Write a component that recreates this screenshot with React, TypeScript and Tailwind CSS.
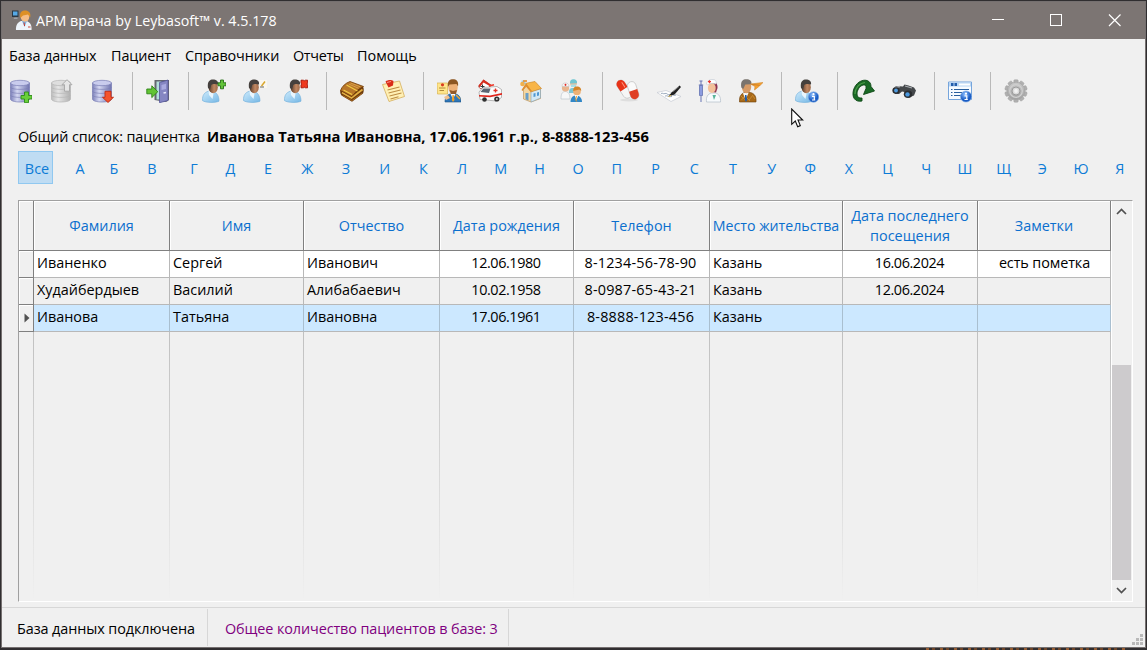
import React from "react";

type IconProps = { children: React.ReactNode };

const Icon = ({ children }: IconProps) => (
  <svg width="24" height="24" viewBox="0 0 24 24" className="block shrink-0">
    {children}
  </svg>
);

const Gradients = () => (
  <svg width="0" height="0" className="absolute">
    <defs>
      <linearGradient id="db" x1="0" x2="1">
        <stop offset="0" stopColor="#7c80ba" />
        <stop offset=".35" stopColor="#d5d8f2" />
        <stop offset="1" stopColor="#6f73ae" />
      </linearGradient>
      <linearGradient id="dbg" x1="0" x2="1">
        <stop offset="0" stopColor="#bdbdbd" />
        <stop offset=".35" stopColor="#e6e6e6" />
        <stop offset="1" stopColor="#b0b0b0" />
      </linearGradient>
      <linearGradient id="shirt" x1="0" x2="1" y2="1">
        <stop offset="0" stopColor="#cdeafb" />
        <stop offset="1" stopColor="#76b8e6" />
      </linearGradient>
      <linearGradient id="skin" x1="0" x2="1">
        <stop offset="0" stopColor="#5a3a28" />
        <stop offset=".6" stopColor="#c08863" />
        <stop offset="1" stopColor="#a06a48" />
      </linearGradient>
      <radialGradient id="info" cx=".4" cy=".3">
        <stop offset="0" stopColor="#8dc0ff" />
        <stop offset="1" stopColor="#1a5cc4" />
      </radialGradient>
      <linearGradient id="gear" x1="0" x2="0" y2="1">
        <stop offset="0" stopColor="#c9c9c9" />
        <stop offset="1" stopColor="#a0a0a0" />
      </linearGradient>
    </defs>
  </svg>
);

const Cylinder = ({ fill, line, top }: { fill: string; line: string; top: string }) => (
  <g>
    <path d="M2.500 4v16c0 1.800 4 3 9.500 3s9.500-1.200 9.500-3V4z" fill={fill} stroke={line} strokeWidth=".7" />
    <ellipse cx="12" cy="4" rx="9.500" ry="2.700" fill={top} stroke={line} strokeWidth=".7" />
    <path
      d="M2.500 8.500c2 2.500 17 2.500 19 0M2.500 12.500c2 2.500 17 2.500 19 0M2.500 16.500c2 2.500 17 2.500 19 0"
      fill="none"
      stroke={line}
      strokeWidth=".8"
      opacity=".8"
    />
  </g>
);

const DbAdd = () => (
  <Icon>
    <Cylinder fill="url(#db)" line="#7a7eb4" top="#c9cced" />
    <path d="M16.500 13h4v3.500H24v3.500h-3.500v3.700h-4V20H13v-3.500h3.500z" fill="#69cf3a" stroke="#2d8a18" strokeWidth=".9" />
  </Icon>
);
const DbUp = () => (
  <Icon>
    <Cylinder fill="url(#dbg)" line="#b4b4b4" top="#dedede" />
    <path d="M18 .7l5 5h-2.500v6.500h-5V5.700H13z" fill="#e6e6e6" stroke="#a6a6a6" strokeWidth=".9" />
  </Icon>
);
const DbDown = () => (
  <Icon>
    <Cylinder fill="url(#db)" line="#7a7eb4" top="#c9cced" />
    <path d="M18 23.500l-5.500-5.200h2.500v-6h6v6h2.500z" fill="#f4532c" stroke="#c22b12" strokeWidth=".9" />
  </Icon>
);
const Exit = () => (
  <Icon>
    <path d="M8.500 1h14.500v20l-3 2-11.500-2z" fill="#64676f" />
    <path d="M10.500 2.500h5v18h-5z" fill="#b3dedc" />
    <path d="M13.500 3.500l8.500-2.500v20.500l-8.500 2.200z" fill="#8586c2" stroke="#55579b" strokeWidth=".8" />
    <path d="M15.500 6l4.500-1.300v5.300l-4.500 1z" fill="#a9aae0" />
    <path d="M17.500 14l2.500-.5" stroke="#e6e6fa" strokeWidth="1.600" />
    <path d="M.8 10h5V6.800l6 5.900-6 5.900v-3.800H.8z" fill="#62c334" stroke="#2d8317" strokeWidth=".9" />
  </Icon>
);

const Person = () => (
  <g>
    <path d="M.4 21.500c0-5.500 2-8 6-9.300h4c4 1 6.600 4 6.600 10-3 1.500-13 2-16.600-.7z" fill="url(#shirt)" stroke="#6dacda" strokeWidth=".6" />
    <path d="M6.500 11l5.500 1-1.500 8-3.500-4z" fill="#e9f6fe" />
    <ellipse cx="11.200" cy="8.300" rx="4.600" ry="6" fill="url(#skin)" />
    <path d="M6 9C5 2 8 .4 11 .4s5.800 1.500 5 5.200C13.500 4.600 10.500 4.800 9.300 6L8 10.500z" fill="#45403d" />
  </g>
);
const UserAdd = () => (
  <Icon>
    <Person />
    <path d="M18.500 1h3v2.800h2.500v3h-2.500v3h-3v-3h-2.500v-3h2.500z" fill="#62c439" stroke="#276f16" strokeWidth=".9" />
  </Icon>
);
const UserEdit = () => (
  <Icon>
    <Person />
    <path d="M16 1h8v8h-8z" fill="#faf7f0" />
    <path d="M18.500 7l3.500-4.500" stroke="#d9a72c" strokeWidth="1.500" />
    <path d="M17 8h4" stroke="#555" strokeWidth=".9" />
  </Icon>
);
const UserRemove = () => (
  <Icon>
    <Person />
    <path d="M17 1.200H19.300L20.300 1.800L21.300 1.200H23.600V3.800L23 5L23.600 6.200V8.800H21.300L20.300 8.200L19.300 8.800H17V6.200L17.600 5L17 3.800Z" fill="#ee3a20" stroke="#a31408" strokeWidth=".9" />
  </Icon>
);
const Info = ({ x, y, r }: { x: number; y: number; r: number }) => (
  <g>
    <circle cx={x} cy={y} r={r} fill="url(#info)" stroke="#8ab3e6" strokeWidth=".6" />
    <circle cx={x} cy={y - 2.8} r="1.100" fill="#fff" />
    <path d={`M${x - 1.5} ${y - 0.7}h2.300v3.700h1M${x - 1.5} ${y + 3}h3`} fill="none" stroke="#fff" strokeWidth="1.200" />
  </g>
);
const UserInfo = () => (
  <Icon>
    <Person />
    <Info x={18.5} y={18} r={5.3} />
  </Icon>
);
const Book = () => (
  <Icon>
    <path d="M.5 11Q-.5 14 1.500 16.500L12 22.800l11-8.300Q24.500 11 23 7.500z" fill="#6d3b0c" />
    <path d="M2 13.500L11.500 19l11-8.500" stroke="#e3ae42" strokeWidth="1.800" fill="none" />
    <path d="M2.500 16.500l9.500 5 10-7" stroke="#a8681f" fill="none" />
    <path d="M.5 11.500Q3 5 10 2.500L23.500 7.500Q17 10 12 17.500z" fill="#b8772a" stroke="#743b06" strokeWidth=".8" />
    <path d="M6.500 6Q11 8.500 17.500 12M3.500 11l8.500 4.500" stroke="#f2cb45" strokeWidth="1.200" fill="none" />
    <path d="M10.500 4l9.500 3.700M9 5.200l9.500 4" stroke="#d9a04c" />
  </Icon>
);
const Note = () => (
  <Icon>
    <path d="M1.500 5.500L18.500 2 23.500 17.500 8 22.500z" fill="#fff0b5" stroke="#d4ad5a" strokeWidth=".8" />
    <path d="M6.500 11l12-3M7.500 14l12-3M8.500 17l12-3M9.500 20l8-2.200" stroke="#bd8c42" strokeWidth="1.100" />
    <path d="M4.500 2.500c2-1.500 6-2 8-.5l-.5 4.500-4.500 2z" fill="#d92c19" />
    <path d="M6 3.500l4-1" stroke="#ff9080" />
  </Icon>
);
const BusinessMan = () => (
  <g>
    <path d="M8 23c0-5 2-7 5-8h6c3.500 1 5 4 5 8z" fill="#2e76b8" stroke="#195284" strokeWidth=".6" />
    <path d="M13.500 15l2.500 5 2.500-5z" fill="#fff" />
    <path d="M15.500 16h1.200l.8 5-1.500 2-1.200-2z" fill="#ef9f27" />
    <ellipse cx="16" cy="8.500" rx="4.700" ry="6.500" fill="#edb178" />
    <path d="M11 8C10 1.500 13 .2 16 .2s6 1.800 5 7.300L19.500 5 12.500 5.500z" fill="#8c5622" />
    <path d="M12.500 11l3.500 1 4-1-1 4h-5z" fill="#935a29" />
  </g>
);
const NotePerson = () => (
  <Icon>
    <BusinessMan />
    <path d="M0 4h10.500v11H.5z" fill="#ffe58a" stroke="#d9b34d" strokeWidth=".7" />
    <path d="M2 9h6.500M2.500 11.500H7" stroke="#b08a39" />
    <circle cx="5.500" cy="5.800" r="1.600" fill="#da3a21" />
    <path d="M7 18l4-2 2 3-4 2z" fill="#f1c08e" />
    <path d="M19 16l4 4" stroke="#efaa34" strokeWidth="1.500" />
  </Icon>
);
const Ambulance = () => (
  <Icon>
    <path d="M.5 7.500L5.500 1 13 6.500 9 9.500H2z" fill="#fff" stroke="#9c4238" strokeWidth=".7" />
    <path d="M.5 6.500L5.500.5l8 5.500-1 1.500-7-4-4 5z" fill="#d52d1e" />
    <path d="M4.500 5.500v4M2.500 7.500h4" stroke="#333" />
    <path d="M1 13l4-4.500 14-1 4.500 3v8l-5 3.500-16.500-1.500z" fill="#fbfbfb" stroke="#9c9c9c" strokeWidth=".7" />
    <path d="M2.500 13l3-3.500h7l-1.500 4.500z" fill="#5b6673" />
    <path d="M1 16l11 .5L24 14v1.700l-12 2.600L1 17.500z" fill="#e0251b" />
    <path d="M17.500 9.500v4M15.500 11.500h4" stroke="#e23328" strokeWidth="1.300" />
    <circle cx="6.500" cy="20.500" r="2.300" fill="#303030" />
    <circle cx="18.800" cy="20" r="2.600" fill="#303030" />
    <circle cx="18.800" cy="20" r="1" fill="#ccc" />
    <path d="M11 7l5-1.200" stroke="#f0382a" strokeWidth="1.600" />
  </Icon>
);
const House = () => (
  <Icon>
    <path d="M4.500 10.500l5.500-6 11.500 6v9L12 23l-7.500-3z" fill="#f4d6a1" stroke="#b78a4c" strokeWidth=".6" />
    <path d="M12 12.500l9.500-3v9.500L12 23z" fill="#d3e8f5" stroke="#82a0b4" strokeWidth=".6" />
    <path d="M6 4.500L16 2.500l6.500 7L13 12.500z" fill="#f8b548" stroke="#cf8a2c" strokeWidth=".7" />
    <path d="M2.500 11L7 4l6 8.500-1 1L7 7.500 3.500 12z" fill="#e08d2a" />
    <path d="M6.500 14h3v7.500l-3-1.200z" fill="#6a9fc8" />
    <path d="M14.500 14.500l2-.6v3.500l-2 .6zM18 13.500l2-.5v3.500l-2 .5z" fill="#4f97d1" />
    <path d="M2.500 1.500h4v4h-4z" fill="#9eceef" />
    <circle cx="3.500" cy="5" r="2.300" fill="#f0b04c" />
    <path d="M4 2h4" stroke="#e88f29" strokeWidth="1.600" />
  </Icon>
);
const Staff = () => (
  <Icon>
    <path d="M9 14c0-4 1-5 4-5s5 2 5 5z" fill="#7ec6d4" />
    <circle cx="13.500" cy="4.500" r="3.300" fill="#e9bd97" />
    <path d="M10 4.500C10 1 11.500.3 13.500.3s3.800 1 3.500 4z" fill="#71c6d1" />
    <path d="M11 5.500h5v2.500h-5z" fill="#a5dfe6" />
    <path d="M1 20c0-5 1-7 4-7.500 3 0 5 2 5 7.500z" fill="#f6f7f8" stroke="#b6bfc8" strokeWidth=".6" />
    <circle cx="5.500" cy="9" r="3.600" fill="#e9b58e" />
    <path d="M2 7.500c0-3 1.500-3.500 3.500-3.500S9 5 9 7.500z" fill="#f5f5f5" stroke="#bbb" strokeWidth=".5" />
    <path d="M5.500 4.800v2M4.500 5.800h2" stroke="#e42a25" />
    <path d="M10.500 23c0-4 2-6.500 5.500-6.500s6 2.500 6 6.500z" fill="#3187c7" />
    <path d="M14.500 16l2 5 2-5z" fill="#fff" />
    <circle cx="17" cy="12.500" r="3.800" fill="#edb175" />
    <path d="M13.200 12c0-4 2-4.500 4-4.500s4 1 4 4.500l-2-1.500z" fill="#d48426" />
    <path d="M16.500 17l-.7 4 1 1.500" stroke="#f1a129" fill="none" />
  </Icon>
);
const Pills = () => (
  <Icon>
    <ellipse cx="13" cy="21" rx="9" ry="1.500" fill="#dedede" />
    <g transform="rotate(57 5 5)">
      <rect x="1" y="1" width="20" height="8.500" rx="4.200" fill="#f6f6f6" stroke="#b8b8b8" strokeWidth=".6" />
      <path d="M5 1h6v8.500H5a4.200 4.200 0 010-8.500z" fill="#e73318" />
      <path d="M4 3.500h6" stroke="#ff937c" />
    </g>
    <g transform="rotate(72 16 7)">
      <rect x="11.500" y="3" width="18" height="8.500" rx="4.200" fill="#fafafa" stroke="#b8b8b8" strokeWidth=".6" />
      <path d="M20.500 3h4.800a4.200 4.200 0 010 8.500h-4.800z" fill="#df4025" />
    </g>
  </Icon>
);
const Sign = () => (
  <Icon>
    <path d="M0 13.500l9-2 15 6-10 5z" fill="#fff" stroke="#c5cad2" strokeWidth=".7" />
    <path d="M4 14.500c2-1 2 1 4 0s2 2 5 1 3 2 6 .5M8 17c3-1 3 1.500 7 .5" fill="none" stroke="#8395ad" strokeWidth=".8" />
    <path d="M11.500 17.500l3-4 8-7 1.500 1.500-6.500 7.500z" fill="#222" />
    <path d="M11.500 17.500l2.500-1.200" stroke="#dfb33c" />
    <path d="M16 12.500l6-5" stroke="#aaa" strokeWidth=".7" />
  </Icon>
);
const Nurse = () => (
  <Icon>
    <path d="M1.500 6.500h3v10h-3z" fill="#8b9be0" stroke="#5867aa" strokeWidth=".7" />
    <path d="M.8 6h4.400M3 2v4M1.500 2h3M3 17v6" stroke="#6573b4" />
    <path d="M8.500 23c-.5-5 1-8 5-9h4c3.500 1 5.500 4 5 9z" fill="#f7fafc" stroke="#b2bdc9" strokeWidth=".7" />
    <path d="M14.500 16l1.500 5 2-5z" fill="#58b49a" />
    <path d="M12 7c0-6 8-6 7.500 2l-1.500 4.500-4-.5z" fill="#8f3450" />
    <ellipse cx="13.800" cy="9" rx="3.900" ry="5" fill="#f3c19a" />
    <path d="M8.500 5C9 1.500 12 .3 15 .5s3.500 2 3 4.500C15 4 12 4 9.500 6z" fill="#fff" stroke="#bec6d0" strokeWidth=".6" />
    <path d="M11.500 1.200v3M10 2.700h3" stroke="#e8332c" strokeWidth="1.200" />
  </Icon>
);
const Advisor = () => (
  <Icon>
    <path d="M.5 23c-.5-6 2-8.500 5-9.500h6c4 1 6 4 5.500 9.500z" fill="#a86918" stroke="#6d400b" strokeWidth=".6" />
    <path d="M2 17l5 5M4 15l7 7M2.500 21l4-5M10 21l4-5M14 17l2 3" stroke="#d3973c" strokeWidth=".7" />
    <path d="M4 14l2.500 7 3-7z" fill="#f7f7f7" />
    <path d="M6 16h1.500l.7 5-1.200 2-1.200-2z" fill="#245da5" />
    <ellipse cx="7.500" cy="8" rx="4.700" ry="6.200" fill="#d79b66" />
    <path d="M2.300 8.500C1.300 2 3.800.3 7.300.3s5.800 1.500 5 5L6.300 5.500 4.300 10z" fill="#7a746e" />
    <path d="M11.500 5L24 3.500l-3.500 3.500L15.500 11l.5-3.500z" fill="#f5a030" stroke="#d08428" strokeWidth=".6" />
    <path d="M12.500 5.300l8 1" stroke="#c77825" strokeWidth=".8" />
  </Icon>
);
const Refresh = () => (
  <Icon>
    <path d="M11 22C4 23.500.5 18 2.500 11 4.500 4 11 0 16 1.500 19 2.500 20 5 20 7.500L23.500 12 12.500 15.500 15 9.500C15.500 6.500 14 5.500 12 6 8 7.500 6 11.500 6 15c0 3 2 4.500 5 4z" fill="#1a6a26" stroke="#0d4715" strokeWidth=".9" />
    <path d="M4 15c0-6 4.500-11 10-11.500" fill="none" stroke="#4a9a48" strokeWidth="1.200" />
  </Icon>
);
const Binoculars = () => (
  <Icon>
    <path d="M1 10l3-3 7 .5 1.500-2 4 1 5.500 2 2 3-2 5-5 2-3-2 1-3-5-1-3 2.500H3z" fill="#44474a" />
    <path d="M3 8.500l5-1M13 7l7 2" stroke="#a9adb1" strokeWidth="1.300" />
    <ellipse cx="4" cy="11.500" rx="3.600" ry="3.300" fill="#2a2d30" />
    <ellipse cx="4" cy="11.500" rx="1.900" ry="2" fill="#4f9bdf" />
    <ellipse cx="16" cy="15.200" rx="4.200" ry="3.700" fill="#2a2d30" />
    <ellipse cx="15.500" cy="15.400" rx="2.200" ry="2.200" fill="#4a98df" />
  </Icon>
);
const FormInfo = () => (
  <Icon>
    <path d="M.5 3h23v17.500H.5z" fill="#f7fbff" stroke="#76a5dc" />
    <path d="M1 3.500h22v4H1z" fill="#b8d5f3" />
    <path d="M3 4h2.500v3H3zM6.500 4H9v3H6.500z" fill="#235dab" />
    <path d="M11 5.500h11" stroke="#fff" strokeWidth="2" />
    <path d="M3 10.500h1.500M3 13.500h1.500M3 16.500h1.500M6 10.500h15M6 13.500h8M6 16.500h7" stroke="#285e9e" strokeWidth="1.200" />
    <Info x={18} y={17.5} r={5.6} />
  </Icon>
);
const teeth = Array.from({ length: 10 }, (_, i) => i * 36);
const Gear = () => (
  <Icon>
    {teeth.map((a) => (
      <rect key={a} x="9.800" y=".8" width="4.400" height="6" rx="1" fill="#b0b0b0" stroke="#a0a0a0" strokeWidth=".5" transform={`rotate(${a} 12 12)`} />
    ))}
    <circle cx="12" cy="12" r="8.800" fill="url(#gear)" stroke="#a5a5a5" strokeWidth=".7" />
    <circle cx="12" cy="12" r="6.300" fill="none" stroke="#cfcfcf" strokeWidth="1.300" />
    <circle cx="12" cy="12" r="4" fill="#dadada" stroke="#9b9b9b" />
    <circle cx="12" cy="12" r="1.900" fill="#f2f2f2" />
  </Icon>
);

const groups: React.FC[][] = [
  [DbAdd, DbUp, DbDown],
  [Exit],
  [UserAdd, UserEdit, UserRemove],
  [Book, Note],
  [NotePerson, Ambulance, House, Staff],
  [Pills, Sign, Nurse, Advisor],
  [UserInfo],
  [Refresh, Binoculars],
  [FormInfo],
  [Gear],
];

const Toolbar = () => (
  <div className="flex h-[38px] pl-[6px]">
    {groups.map((g, i) => (
      <div
        key={i}
        className={
          i === 0
            ? "flex gap-[17px] pr-[18px] pt-[7px]"
            : "flex gap-[17px] border-l border-[#b9b9b9] pl-[13px] pr-[18px] pt-[7px]"
        }
      >
        {g.map((C, k) => (
          <C key={k} />
        ))}
      </div>
    ))}
  </div>
);

const AppIcon = () => (
  <svg width="20" height="20" viewBox="0 0 20 20" className="mt-[8px] block shrink-0">
    <path d="M0 .5h6.500V7H0z" fill="#2b3844" />
    <path d="M1 1.500h4.500v4H1z" fill="#56a9e6" />
    <path d="M2.500 7.500h3V9h-4z" fill="#9ba1a8" />
    <path d="M4 20c-.5-5 2-8 5-9h5.500c3.500 1 5.500 4 5 9z" fill="#eef4fa" />
    <path d="M10 11l2.500 6 2.500-6z" fill="#7fb2e2" />
    <path d="M12 12.500l.6 3.500" stroke="#c83a2b" fill="none" />
    <ellipse cx="13" cy="6.800" rx="4.300" ry="5" fill="#f5bd86" />
    <path d="M8.300 8C7.300 2.500 9.500.5 13 .5s6.200 2 5.200 7L16 4.500l-5 1z" fill="#dd9026" />
    <path d="M16 17h2.500" stroke="#cf4636" />
  </svg>
);

const TitleBar = () => (
  <div className="flex h-[37px] bg-[#7c7573] pl-[10px] text-white">
    <AppIcon />
    <span className="ml-[4px] mt-[9px] flex-1 whitespace-nowrap text-[14.25px] leading-[20px]">
      АРМ врача by Leybasoft™ v. 4.5.178
    </span>
    <svg width="160" height="37" viewBox="985 2 160 37" fill="none" stroke="#fff">
      <path d="M992 19.500h12M1050.500 14.500h11v11h-11z" shapeRendering="crispEdges" />
      <path d="M1109 14.500l11.500 11.500M1120.500 14.500L1109 26" strokeWidth="1.200" />
    </svg>
  </div>
);

const MenuBar = () => (
  <div className="flex h-[33px] whitespace-nowrap pl-[7px] pt-[7px] leading-[20px] tracking-[-0.1px]">
    <span className="w-[102px]">База данных</span>
    <span className="w-[74px]">Пациент</span>
    <span className="w-[108px]">Справочники</span>
    <span className="w-[64px] tracking-[-0.35px]">Отчеты</span>
    <span className="tracking-normal">Помощь</span>
  </div>
);

const letters: [string, string][] = [
  ["А", "w-[38px]"],
  ["Б", "w-[30px]"],
  ["В", "w-[46px]"],
  ["Г", "w-[38px]"],
  ["Д", "w-[35px]"],
  ["Е", "w-[40px]"],
  ...Array.from("ЖЗИКЛМНОПРСТУФХЦЧШЩЭЮЯ", (l): [string, string] => [l, "w-[38.7px]"]),
];

const Alphabet = () => (
  <div className="flex h-[33px] pl-[16px] leading-[35px] text-[#0c7bd6]">
    <span className="mr-[8px] w-[35px] border border-[#90c8f0] bg-[#bfdcf3] pl-[3px] text-center leading-[33px]">Все</span>
    {letters.map(([l, w]) => (
      <span key={l} className={`${w} shrink-0 text-center`}>
        {l}
      </span>
    ))}
  </div>
);

const cols = "grid grid-cols-[15px_136px_134px_136px_134px_136px_133px_135px_133px]";
const headers = [
  "",
  "Фамилия",
  "Имя",
  "Отчество",
  "Дата рождения",
  "Телефон",
  "Место жительства",
  "Дата последнего посещения",
  "Заметки",
];
const rows = [
  ["Иваненко", "Сергей", "Иванович", "12.06.1980", "8-1234-56-78-90", "Казань", "16.06.2024", "есть пометка"],
  ["Худайбердыев", "Василий", "Алибабаевич", "10.02.1958", "8-0987-65-43-21", "Казань", "12.06.2024", ""],
  ["Иванова", "Татьяна", "Ивановна", "17.06.1961", "8-8888-123-456", "Казань", "", ""],
];
const rowBg = ["bg-white", "bg-[#f0f0f0]", "bg-[#cce8ff]"];
const cellStyle = [
  "pl-[3px]",
  "pl-[3px]",
  "pl-[3px]",
  "text-center tracking-[-0.4px] pr-px",
  "text-center tracking-[0.2px] pr-[2px]",
  "pl-[3px]",
  "text-center tracking-[-0.4px] pr-px",
  "text-center tracking-[-0.1px] pl-px",
];

const Table = () => (
  <div className="ml-[16px] flex h-[402px] w-[1115px] border-b border-l border-r border-t border-b-white border-l-[#a0a0a0] border-r-white border-t-[#a0a0a0]">
    <div className="flex w-[1092px] shrink-0 flex-col">
      <div className={`${cols} h-[50px] shrink-0`}>
        {headers.map((h, i) => (
          <div
            key={i}
            className="flex items-center justify-center border-b border-r border-[#808080] text-center leading-[20px] text-[#0b6fce] shadow-[inset_1px_1px_0_#fff]"
          >
            <span className={i === 6 ? "whitespace-nowrap text-[14.2px]" : ""}>{h}</span>
          </div>
        ))}
      </div>
      {rows.map((r, ri) => (
        <div key={ri} className={`${cols} h-[27px] shrink-0 leading-[24px] text-black`}>
          <div className="flex items-center border-b border-r border-[#808080] bg-[#f0f0f0] pl-[5px] shadow-[inset_1px_1px_0_#fff]">
            {ri === 2 && (
              <svg width="6" height="10" viewBox="0 0 6 10">
                <path d="M.5.5v9L5.500 5z" fill="#505050" />
              </svg>
            )}
          </div>
          {r.map((c, i) => (
            <div
              key={i}
              className={`${rowBg[ri]} ${cellStyle[i]} ${
                ri === 2 ? "border-r-[#a9bfd0]" : "border-r-[#b8b8b8]"
              } whitespace-nowrap border-b border-r border-b-[#b8b8b8]`}
            >
              {c}
            </div>
          ))}
        </div>
      ))}
      <div className={`${cols} flex-1`}>
        {headers.map((_, i) => (
          <div key={i} className="flex justify-end">
            <div className="w-px bg-linear-to-b from-[#c0c0c0] to-[#f0f0f0]" />
          </div>
        ))}
      </div>
    </div>
    <div className="flex w-[21px] flex-col border-l border-white pr-px">
      <svg width="19" height="21" viewBox="0 0 19 21" fill="none" stroke="#505050" strokeWidth="1.700">
        <path d="M5 13l4.500-4.500L14 13" />
      </svg>
      <div className="mt-[143px] h-[215px] w-[19px] bg-[#cdcbcd]" />
      <svg width="19" height="20" viewBox="0 0 19 20" fill="none" stroke="#505050" strokeWidth="1.700">
        <path d="M5 8l4.500 4.500L14 8" />
      </svg>
    </div>
  </div>
);

const StatusBar = () => (
  <div className="mt-[5px] flex h-[40px] border-t border-[#d7d7d7] pt-px">
    <div className="h-[37px] w-[206px] whitespace-nowrap border-r border-[#d7d7d7] pl-[15px] leading-[39px] tracking-[-0.08px] text-black">
      База данных подключена
    </div>
    <div className="h-[37px] w-[301px] whitespace-nowrap border-r border-[#d7d7d7] pl-[17px] leading-[39px] tracking-[-0.1px] text-[#800080]">
      Общее количество пациентов в базе: 3
    </div>
    <svg width="11" height="11" viewBox="0 0 11 11" fill="#b9b9b9" className="ml-auto mr-[2px] mt-[25px]" shapeRendering="crispEdges">
      <path d="M8 0h3v3H8zM4 4h3v3H4zM8 4h3v3H8zM0 8h3v3H0zM4 8h3v3H4zM8 8h3v3H8z" />
    </svg>
  </div>
);

const Pointer = () => (
  <svg width="13" height="20" viewBox="0 0 13 20" className="absolute left-[791px] top-[108px]">
    <path d="M.7 1v15.300L4.300 13l2.400 5.700 2.600-1.100L7 12h4.700z" fill="#fff" stroke="#111" strokeWidth="1.100" />
  </svg>
);

const App = () => (
  <div className="relative flex h-[650px] w-[1147px] flex-col overflow-hidden bg-[#302e30] pl-[1px] pt-[1px] font-['Open_Sans','Noto_Sans',sans-serif] text-[14.4px] text-black">
    <Gradients />
    <div className="flex h-[647px] w-[1145px] flex-col border border-[#757070] bg-[#f0f0f0]">
      <TitleBar />
      <MenuBar />
      <Toolbar />
      <div className="flex h-[41px] whitespace-nowrap pl-[16px] pt-[17px] leading-[20px]">
        <span className="w-[189px] tracking-[-0.12px]">Общий список: пациентка</span>
        <b className="text-[14.75px] leading-[19px]">Иванова Татьяна Ивановна, 17.06.1961 г.р., 8-8888-123-456</b>
      </div>
      <Alphabet />
      <div className="h-[16px] shrink-0" />
      <Table />
      <StatusBar />
    </div>
    <div className="ml-[920px] h-[2px] w-[205px] bg-[repeating-linear-gradient(90deg,#302e30_0_5px,#955b31_5px_8px,#302e30_8px_11px,#6f4529_11px_14px)]" />
    <Pointer />
  </div>
);

export default App;
